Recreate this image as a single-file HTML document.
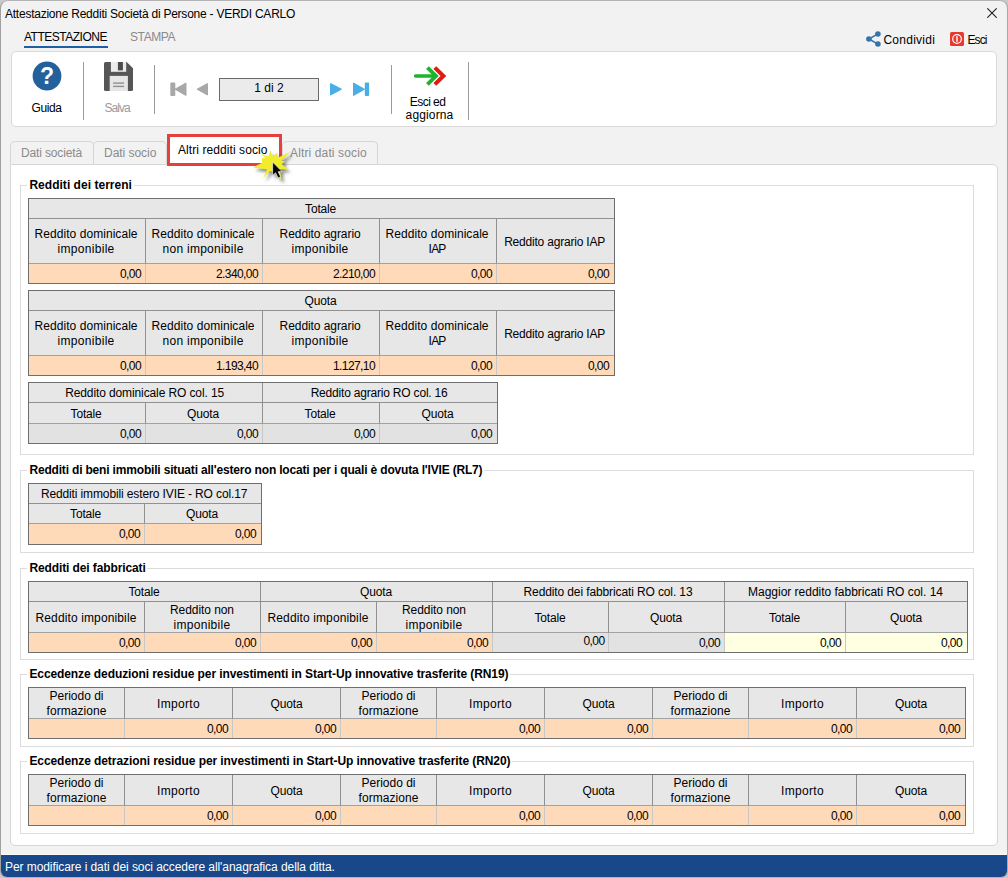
<!DOCTYPE html>
<html lang="it"><head><meta charset="utf-8"><title>Attestazione Redditi Società di Persone - VERDI CARLO</title>
<style>
*{box-sizing:content-box;margin:0;padding:0}
html,body{width:1008px;height:878px;overflow:hidden;background:#f2f2f2}
body{position:relative;font-family:"Liberation Sans",sans-serif;font-size:12px;color:#000;line-height:15px}
div{position:absolute}
.t{white-space:nowrap;line-height:15px}
.b{font-weight:bold;background:#fff;padding:0 2px}
.tb{border:0;box-sizing:border-box;border:1px solid #6e6e6e;background:#e7e7e7}
.c{display:flex;align-items:center;justify-content:center;text-align:center;background:#e7e7e7;overflow:hidden}
.c span{display:block;line-height:15px;white-space:nowrap;position:relative;top:1.4px}
.c i{display:block;font-style:normal}
.vp,.vg,.vy{justify-content:flex-end}
.vp span,.vg span,.vy span{padding-right:4px;letter-spacing:-0.59px;top:0.6px}
.vp{background:#ffdab9}
.vg{background:#e2e2e2}
.vy{background:#ffffe1}
.gb{border:1px solid #dcdcdc;box-sizing:border-box}
.sep{width:1px;background:#9a9a9a}
</style></head>
<body>
<div style="left:0;top:0;width:1008px;height:878px;background:#c9c9c9"></div>
<div style="left:0;top:0;width:1008px;height:878px;box-sizing:border-box;border:1px solid #b4b4b4;border-left-color:#a0a0a0;border-right-color:#a8a8a8;border-radius:8px 8px 7px 7px;background:#f2f2f2"></div>
<div class="t" style="left:5px;top:7px;letter-spacing:-0.24px">Attestazione Redditi Società di Persone - VERDI CARLO</div>
<svg style="position:absolute;left:987px;top:8px" width="10" height="10" viewBox="0 0 10 10"><path d="M0.3 0.3 L9.7 9.7 M9.7 0.3 L0.3 9.7" stroke="#222" stroke-width="1.1" fill="none"/></svg>
<div class="t" style="left:24px;top:30px;letter-spacing:-0.5px;color:#000">ATTESTAZIONE</div>
<div style="left:24px;top:46px;width:84px;height:2px;background:#1f5fa3"></div>
<div class="t" style="left:130px;top:30px;letter-spacing:-0.4px;color:#8a8a8a">STAMPA</div>
<svg style="position:absolute;left:865px;top:31px" width="17" height="17" viewBox="0 0 17 17">
<path d="M4 8 L12.5 3.2 M4 8 L12.5 12.8" stroke="#3573ab" stroke-width="1.5" fill="none"/>
<circle cx="3.9" cy="8" r="2.8" fill="#3573ab"/><circle cx="12.9" cy="3" r="2.8" fill="#3573ab"/><circle cx="12.9" cy="13" r="2.8" fill="#3573ab"/></svg>
<div class="t" style="left:883.4px;top:33px;letter-spacing:0.269px;">Condividi</div>
<svg style="position:absolute;left:950px;top:32px" width="14" height="14" viewBox="0 0 14 14">
<rect x="0" y="0" width="14" height="14" rx="1.5" fill="#e8392f"/>
<circle cx="7" cy="7" r="4.3" fill="none" stroke="#fff" stroke-width="1.2"/>
<rect x="6.3" y="4.2" width="1.4" height="5.6" fill="#fff"/></svg>
<div class="t" style="left:967.4px;top:33px;letter-spacing:-0.868px;">Esci</div>
<div style="left:11px;top:51px;width:986px;height:76px;box-sizing:border-box;border:1px solid #d9d9d9;border-radius:5px;background:#fff"></div>
<svg style="position:absolute;left:32px;top:61px" width="30" height="30" viewBox="0 0 30 30">
<circle cx="15" cy="15" r="14.4" fill="#23619d"/>
<text x="15.1" y="23.4" text-anchor="middle" font-family="Liberation Sans, sans-serif" font-weight="bold" font-size="23" fill="#fff">?</text></svg>
<div class="t" style="left:31.6px;top:101px;letter-spacing:-0.446px;">Guida</div>
<div class="sep" style="left:83px;top:62px;width:1px;height:58px;"></div>
<svg style="position:absolute;left:104px;top:62px" width="29" height="29" viewBox="0 0 29 29">
<path d="M1.5 0 H22.7 L29 6.2 V27.5 Q29 29 27.5 29 H1.5 Q0 29 0 27.5 V1.5 Q0 0 1.5 0 Z" fill="#565656"/>
<rect x="6.9" y="0" width="15.3" height="9.8" fill="#ececec"/>
<rect x="13.9" y="0" width="5" height="8.4" fill="#4c4c4c"/>
<rect x="5.7" y="13.9" width="18.2" height="15.1" fill="#e6e6e6"/>
<rect x="9.1" y="20.4" width="11" height="1.4" fill="#909090"/><rect x="9.1" y="23.7" width="11" height="1.4" fill="#909090"/>
</svg>
<div class="t" style="left:104.5px;top:101px;letter-spacing:-0.965px;color:#9a9a9a">Salva</div>
<div class="sep" style="left:154px;top:65px;width:1px;height:49px;"></div>
<svg style="position:absolute;left:170px;top:82px" width="40" height="15" viewBox="0 0 40 15">
<rect x="0.3" y="0.5" width="5" height="13.5" rx="1" fill="#a8a8a8"/>
<path d="M16 1 V13.5 L5 7.2 Z" fill="#a8a8a8" stroke="#a8a8a8" stroke-width="1" stroke-linejoin="round"/>
<path d="M37.5 1.5 V13 L27 7.2 Z" fill="#a8a8a8" stroke="#a8a8a8" stroke-width="1" stroke-linejoin="round"/>
</svg>
<div style="left:219px;top:78px;width:100px;height:23px;box-sizing:border-box;border:1px solid #6a6a6a;background:#ebebeb;text-align:center;line-height:19px">1 di 2</div>
<svg style="position:absolute;left:329px;top:82px" width="41" height="15" viewBox="0 0 41 15">
<path d="M1.5 1.5 V13 L12.5 7.2 Z" fill="#48aee7" stroke="#48aee7" stroke-width="1" stroke-linejoin="round"/>
<path d="M24.5 1 V13.5 L35.5 7.2 Z" fill="#48aee7" stroke="#48aee7" stroke-width="1" stroke-linejoin="round"/>
<rect x="35.8" y="0.5" width="4.3" height="13.5" rx="1" fill="#48aee7"/>
</svg>
<div class="sep" style="left:391px;top:65px;width:1px;height:49px;"></div>
<svg style="position:absolute;left:413px;top:65px" width="34" height="22" viewBox="0 0 34 22">
<path d="M21.8 2.6 L30.4 11 L21.8 19.4" fill="none" stroke="#e01c12" stroke-width="4" stroke-linecap="butt" stroke-linejoin="miter"/>
<path d="M2.6 11 H23" fill="none" stroke="#1db32f" stroke-width="3.6" stroke-linecap="round"/>
<path d="M14.4 2.6 L23 11 L14.4 19.4" fill="none" stroke="#1db32f" stroke-width="3.8" stroke-linecap="butt" stroke-linejoin="miter"/>
</svg>
<div class="t" style="left:409.8px;top:95px;letter-spacing:-0.551px;">Esci ed</div>
<div class="t" style="left:405.6px;top:108px;letter-spacing:0.135px;">aggiorna</div>
<div class="sep" style="left:468px;top:62px;width:1px;height:58px;"></div>
<div style="left:10px;top:164px;width:988px;height:682px;box-sizing:border-box;border:1px solid #d6d6d6;border-radius:0 5px 5px 5px;background:#fff"></div>
<div style="left:10px;top:141px;width:84px;height:23px;box-sizing:border-box;border:1px solid #d6d6d6;border-bottom:0;border-radius:5px 5px 0 0;background:#f2f2f2"></div>
<div class="t" style="left:21px;top:146px;letter-spacing:-0.143px;color:#8a8a8a">Dati società</div>
<div style="left:93px;top:141px;width:74px;height:23px;box-sizing:border-box;border:1px solid #d6d6d6;border-bottom:0;border-radius:5px 5px 0 0;background:#f2f2f2"></div>
<div class="t" style="left:104px;top:146px;letter-spacing:-0.040px;color:#8a8a8a">Dati socio</div>
<div style="left:282px;top:141px;width:96px;height:23px;box-sizing:border-box;border:1px solid #d6d6d6;border-bottom:0;border-radius:5px 5px 0 0;background:#f2f2f2"></div>
<div class="t" style="left:290px;top:146px;letter-spacing:0.130px;color:#8a8a8a">Altri dati socio</div>
<div style="left:167px;top:134px;width:115px;height:32px;box-sizing:border-box;border:3px solid #e5403c;background:#fff"></div>
<div class="t" style="left:178px;top:143px;letter-spacing:0.076px;">Altri redditi socio</div>
<svg style="position:absolute;left:240px;top:130px;overflow:visible" width="70" height="61" viewBox="0 0 1008 878">
<g style="filter:drop-shadow(40px 45px 25px rgba(0,0,0,0.42))">
<polygon points="440,290 475,385 540,320 545,400 730,310 600,440 650,455 600,490 690,570 570,560 600,730 500,600 430,590 330,700 390,570 340,560 180,540 320,470 310,410 370,400 300,340 410,380" fill="#f1ed2c"/>
<path d="M470,462 L470,655 L512,615 L548,690 L585,672 L550,600 L605,598 Z" fill="#050505" stroke="#fff" stroke-width="9" stroke-linejoin="round"/>
</g>
</svg>
<div style="left:1px;top:854px;width:1006px;height:1px;background:#fbfbfb"></div>
<div style="left:1px;top:855px;width:1006px;height:22px;background:#18478a;border-radius:0 0 6px 6px"></div>
<div class="t" style="left:5px;top:860px;color:#fff;letter-spacing:-0.07px">Per modificare i dati dei soci accedere all'anagrafica della ditta.</div>
<div class="gb" style="left:20px;top:185px;width:954px;height:270px;"></div>
<div class="t b" style="left:27px;top:178px;letter-spacing:0.029px;width:104.2px;overflow:hidden;padding:0 0 0 2.4px">Redditi dei terreni</div>
<div class="gb" style="left:20px;top:470px;width:954px;height:83px;"></div>
<div class="t b" style="left:27px;top:463px;letter-spacing:-0.175px;width:454.8px;overflow:hidden;padding:0 0 0 2.4px">Redditi di beni immobili situati all'estero non locati per i quali è dovuta l'IVIE (RL7)</div>
<div class="gb" style="left:20px;top:568px;width:954px;height:92px;"></div>
<div class="t b" style="left:27px;top:561px;letter-spacing:-0.110px;width:117.9px;overflow:hidden;padding:0 0 0 2.4px">Redditi dei fabbricati</div>
<div class="gb" style="left:20px;top:674px;width:954px;height:73px;"></div>
<div class="t b" style="left:27px;top:667px;letter-spacing:-0.091px;width:480.8px;overflow:hidden;padding:0 0 0 2.4px">Eccedenze deduzioni residue per investimenti in Start-Up innovative trasferite (RN19)</div>
<div class="gb" style="left:20px;top:761px;width:954px;height:73px;"></div>
<div class="t b" style="left:27px;top:754px;letter-spacing:-0.074px;width:482.8px;overflow:hidden;padding:0 0 0 2.4px">Eccedenze detrazioni residue per investimenti in Start-Up innovative trasferite (RN20)</div>
<div class="tb" style="left:28px;top:198px;width:587px;height:86px"></div>
<div class="c h" style="left:29px;top:199px;width:585px;height:19px;border-bottom:1px solid #909090;"><span style="left:-0.9px"><i style="letter-spacing:-0.173px;">Totale</i></span></div>
<div class="c h" style="left:29px;top:219px;width:116px;height:44px;border-right:1px solid #909090;border-bottom:1px solid #a2a2a2;"><span style="left:-0.9px"><i style="letter-spacing:0.051px;">Reddito dominicale</i><i style="letter-spacing:0.295px;">imponibile</i></span></div>
<div class="c vp" style="left:29px;top:264px;width:116px;height:19px;border-right:1px solid #c8c8c8;"><span><i>0,00</i></span></div>
<div class="c h" style="left:146px;top:219px;width:116px;height:44px;border-right:1px solid #909090;border-bottom:1px solid #a2a2a2;"><span style="left:-0.9px"><i style="letter-spacing:0.051px;">Reddito dominicale</i><i style="letter-spacing:0.256px;">non imponibile</i></span></div>
<div class="c vp" style="left:146px;top:264px;width:116px;height:19px;border-right:1px solid #c8c8c8;"><span><i>2.340,00</i></span></div>
<div class="c h" style="left:263px;top:219px;width:116px;height:44px;border-right:1px solid #909090;border-bottom:1px solid #a2a2a2;"><span style="left:-0.9px"><i style="letter-spacing:-0.072px;">Reddito agrario</i><i style="letter-spacing:0.295px;">imponibile</i></span></div>
<div class="c vp" style="left:263px;top:264px;width:116px;height:19px;border-right:1px solid #c8c8c8;"><span><i>2.210,00</i></span></div>
<div class="c h" style="left:380px;top:219px;width:116px;height:44px;border-right:1px solid #909090;border-bottom:1px solid #a2a2a2;"><span style="left:-0.9px"><i style="letter-spacing:0.051px;">Reddito dominicale</i><i style="letter-spacing:-0.781px;">IAP</i></span></div>
<div class="c vp" style="left:380px;top:264px;width:116px;height:19px;border-right:1px solid #c8c8c8;"><span><i>0,00</i></span></div>
<div class="c h" style="left:497px;top:219px;width:117px;height:44px;border-bottom:1px solid #a2a2a2;"><span style="left:-0.9px"><i style="letter-spacing:-0.198px;">Reddito agrario IAP</i></span></div>
<div class="c vp" style="left:497px;top:264px;width:117px;height:19px;"><span style="padding-right:5px"><i>0,00</i></span></div>
<div class="tb" style="left:28px;top:290px;width:587px;height:86px"></div>
<div class="c h" style="left:29px;top:291px;width:585px;height:19px;border-bottom:1px solid #909090;"><span style="left:-0.9px"><i style="letter-spacing:-0.140px;">Quota</i></span></div>
<div class="c h" style="left:29px;top:311px;width:116px;height:44px;border-right:1px solid #909090;border-bottom:1px solid #a2a2a2;"><span style="left:-0.9px"><i style="letter-spacing:0.051px;">Reddito dominicale</i><i style="letter-spacing:0.295px;">imponibile</i></span></div>
<div class="c vp" style="left:29px;top:356px;width:116px;height:19px;border-right:1px solid #c8c8c8;"><span><i>0,00</i></span></div>
<div class="c h" style="left:146px;top:311px;width:116px;height:44px;border-right:1px solid #909090;border-bottom:1px solid #a2a2a2;"><span style="left:-0.9px"><i style="letter-spacing:0.051px;">Reddito dominicale</i><i style="letter-spacing:0.256px;">non imponibile</i></span></div>
<div class="c vp" style="left:146px;top:356px;width:116px;height:19px;border-right:1px solid #c8c8c8;"><span><i>1.193,40</i></span></div>
<div class="c h" style="left:263px;top:311px;width:116px;height:44px;border-right:1px solid #909090;border-bottom:1px solid #a2a2a2;"><span style="left:-0.9px"><i style="letter-spacing:-0.072px;">Reddito agrario</i><i style="letter-spacing:0.295px;">imponibile</i></span></div>
<div class="c vp" style="left:263px;top:356px;width:116px;height:19px;border-right:1px solid #c8c8c8;"><span><i>1.127,10</i></span></div>
<div class="c h" style="left:380px;top:311px;width:116px;height:44px;border-right:1px solid #909090;border-bottom:1px solid #a2a2a2;"><span style="left:-0.9px"><i style="letter-spacing:0.051px;">Reddito dominicale</i><i style="letter-spacing:-0.781px;">IAP</i></span></div>
<div class="c vp" style="left:380px;top:356px;width:116px;height:19px;border-right:1px solid #c8c8c8;"><span><i>0,00</i></span></div>
<div class="c h" style="left:497px;top:311px;width:117px;height:44px;border-bottom:1px solid #a2a2a2;"><span style="left:-0.9px"><i style="letter-spacing:-0.198px;">Reddito agrario IAP</i></span></div>
<div class="c vp" style="left:497px;top:356px;width:117px;height:19px;"><span style="padding-right:5px"><i>0,00</i></span></div>
<div class="tb" style="left:28px;top:382px;width:470px;height:62px"></div>
<div class="c h" style="left:29px;top:383px;width:233px;height:19px;border-right:1px solid #909090;border-bottom:1px solid #909090;"><span style="left:-0.9px"><i style="letter-spacing:-0.108px;">Reddito dominicale RO col. 15</i></span></div>
<div class="c h" style="left:263px;top:383px;width:234px;height:19px;border-bottom:1px solid #909090;"><span style="left:-0.9px"><i style="letter-spacing:-0.197px;">Reddito agrario RO col. 16</i></span></div>
<div class="c h" style="left:29px;top:403px;width:116px;height:20px;border-right:1px solid #909090;border-bottom:1px solid #a2a2a2;"><span style="left:-0.9px"><i style="letter-spacing:-0.173px;">Totale</i></span></div>
<div class="c vg" style="left:29px;top:424px;width:116px;height:19px;border-right:1px solid #c8c8c8;"><span><i>0,00</i></span></div>
<div class="c h" style="left:146px;top:403px;width:116px;height:20px;border-right:1px solid #909090;border-bottom:1px solid #a2a2a2;"><span style="left:-0.9px"><i style="letter-spacing:-0.140px;">Quota</i></span></div>
<div class="c vg" style="left:146px;top:424px;width:116px;height:19px;border-right:1px solid #c8c8c8;"><span><i>0,00</i></span></div>
<div class="c h" style="left:263px;top:403px;width:116px;height:20px;border-right:1px solid #909090;border-bottom:1px solid #a2a2a2;"><span style="left:-0.9px"><i style="letter-spacing:-0.173px;">Totale</i></span></div>
<div class="c vg" style="left:263px;top:424px;width:116px;height:19px;border-right:1px solid #c8c8c8;"><span><i>0,00</i></span></div>
<div class="c h" style="left:380px;top:403px;width:117px;height:20px;border-bottom:1px solid #a2a2a2;"><span style="left:-0.9px"><i style="letter-spacing:-0.140px;">Quota</i></span></div>
<div class="c vg" style="left:380px;top:424px;width:117px;height:19px;"><span style="padding-right:5px"><i>0,00</i></span></div>
<div class="tb" style="left:28px;top:483px;width:234px;height:62px"></div>
<div class="c h" style="left:29px;top:484px;width:232px;height:19px;border-bottom:1px solid #909090;"><span style="left:-0.9px"><i style="letter-spacing:-0.124px;">Redditi immobili estero IVIE - RO col.17</i></span></div>
<div class="c h" style="left:29px;top:504px;width:115px;height:19px;border-right:1px solid #909090;border-bottom:1px solid #a2a2a2;"><span style="left:-0.9px"><i style="letter-spacing:-0.173px;">Totale</i></span></div>
<div class="c vp" style="left:29px;top:524px;width:115px;height:20px;border-right:1px solid #c8c8c8;"><span><i>0,00</i></span></div>
<div class="c h" style="left:145px;top:504px;width:116px;height:19px;border-bottom:1px solid #a2a2a2;"><span style="left:-0.9px"><i style="letter-spacing:-0.140px;">Quota</i></span></div>
<div class="c vp" style="left:145px;top:524px;width:116px;height:20px;"><span style="padding-right:5px"><i>0,00</i></span></div>
<div class="tb" style="left:28px;top:581px;width:940px;height:72px"></div>
<div class="c h" style="left:29px;top:582px;width:231px;height:19px;border-right:1px solid #909090;border-bottom:1px solid #909090;"><span style="left:-0.5px"><i style="letter-spacing:-0.173px;">Totale</i></span></div>
<div class="c h" style="left:261px;top:582px;width:231px;height:19px;border-right:1px solid #909090;border-bottom:1px solid #909090;"><span style="left:-0.5px"><i style="letter-spacing:-0.140px;">Quota</i></span></div>
<div class="c h" style="left:493px;top:582px;width:231px;height:19px;border-right:1px solid #909090;border-bottom:1px solid #909090;"><span style="left:-0.5px"><i style="letter-spacing:-0.116px;">Reddito dei fabbricati RO col. 13</i></span></div>
<div class="c h" style="left:725px;top:582px;width:242px;height:19px;border-bottom:1px solid #909090;"><span style="left:-0.5px"><i style="letter-spacing:-0.013px;">Maggior reddito fabbricati RO col. 14</i></span></div>
<div class="c h" style="left:29px;top:602px;width:115px;height:30px;border-right:1px solid #909090;border-bottom:1px solid #a2a2a2;"><span style="left:-0.5px"><i style="letter-spacing:0.125px;">Reddito imponibile</i></span></div>
<div class="c vp" style="left:29px;top:633px;width:115px;height:19px;border-right:1px solid #c8c8c8;"><span><i>0,00</i></span></div>
<div class="c h" style="left:145px;top:602px;width:115px;height:30px;border-right:1px solid #909090;border-bottom:1px solid #a2a2a2;"><span style="left:-0.5px"><i style="letter-spacing:-0.067px;">Reddito non</i><i style="letter-spacing:0.295px;">imponibile</i></span></div>
<div class="c vp" style="left:145px;top:633px;width:115px;height:19px;border-right:1px solid #c8c8c8;"><span><i>0,00</i></span></div>
<div class="c h" style="left:261px;top:602px;width:115px;height:30px;border-right:1px solid #909090;border-bottom:1px solid #a2a2a2;"><span style="left:-0.5px"><i style="letter-spacing:0.125px;">Reddito imponibile</i></span></div>
<div class="c vp" style="left:261px;top:633px;width:115px;height:19px;border-right:1px solid #c8c8c8;"><span><i>0,00</i></span></div>
<div class="c h" style="left:377px;top:602px;width:115px;height:30px;border-right:1px solid #909090;border-bottom:1px solid #a2a2a2;"><span style="left:-0.5px"><i style="letter-spacing:-0.067px;">Reddito non</i><i style="letter-spacing:0.295px;">imponibile</i></span></div>
<div class="c vp" style="left:377px;top:633px;width:115px;height:19px;border-right:1px solid #c8c8c8;"><span><i>0,00</i></span></div>
<div class="c h" style="left:493px;top:602px;width:115px;height:30px;border-right:1px solid #909090;border-bottom:1px solid #a2a2a2;"><span style="left:-0.5px"><i style="letter-spacing:-0.173px;">Totale</i></span></div>
<div class="c vg" style="left:493px;top:633px;width:115px;height:19px;border-right:1px solid #c8c8c8;"><span style="top:-1.4px;padding-right:3.5px"><i>0,00</i></span></div>
<div class="c h" style="left:609px;top:602px;width:115px;height:30px;border-right:1px solid #909090;border-bottom:1px solid #a2a2a2;"><span style="left:-0.5px"><i style="letter-spacing:-0.140px;">Quota</i></span></div>
<div class="c vg" style="left:609px;top:633px;width:115px;height:19px;border-right:1px solid #c8c8c8;"><span><i>0,00</i></span></div>
<div class="c h" style="left:725px;top:602px;width:120px;height:30px;border-right:1px solid #909090;border-bottom:1px solid #a2a2a2;"><span style="left:-0.5px"><i style="letter-spacing:-0.173px;">Totale</i></span></div>
<div class="c vy" style="left:725px;top:633px;width:120px;height:19px;border-right:1px solid #c8c8c8;"><span><i>0,00</i></span></div>
<div class="c h" style="left:846px;top:602px;width:121px;height:30px;border-bottom:1px solid #a2a2a2;"><span style="left:-0.5px"><i style="letter-spacing:-0.140px;">Quota</i></span></div>
<div class="c vy" style="left:846px;top:633px;width:121px;height:19px;"><span style="padding-right:5px"><i>0,00</i></span></div>
<div class="tb" style="left:28px;top:687px;width:938px;height:52px"></div>
<div class="c h" style="left:29px;top:688px;width:95px;height:30px;border-right:1px solid #909090;border-bottom:1px solid #a2a2a2;"><span style="left:0px"><i style="letter-spacing:-0.005px;">Periodo di</i><i style="letter-spacing:0.062px;">formazione</i></span></div>
<div class="c vp" style="left:29px;top:719px;width:95px;height:19px;border-right:1px solid #c8c8c8;"><span><i></i></span></div>
<div class="c h" style="left:125px;top:688px;width:107px;height:30px;border-right:1px solid #909090;border-bottom:1px solid #a2a2a2;"><span style="left:0px"><i style="letter-spacing:0.330px;">Importo</i></span></div>
<div class="c vp" style="left:125px;top:719px;width:107px;height:19px;border-right:1px solid #c8c8c8;"><span><i>0,00</i></span></div>
<div class="c h" style="left:233px;top:688px;width:107px;height:30px;border-right:1px solid #909090;border-bottom:1px solid #a2a2a2;"><span style="left:0px"><i style="letter-spacing:-0.140px;">Quota</i></span></div>
<div class="c vp" style="left:233px;top:719px;width:107px;height:19px;border-right:1px solid #c8c8c8;"><span><i>0,00</i></span></div>
<div class="c h" style="left:341px;top:688px;width:95px;height:30px;border-right:1px solid #909090;border-bottom:1px solid #a2a2a2;"><span style="left:0px"><i style="letter-spacing:-0.005px;">Periodo di</i><i style="letter-spacing:0.062px;">formazione</i></span></div>
<div class="c vp" style="left:341px;top:719px;width:95px;height:19px;border-right:1px solid #c8c8c8;"><span><i></i></span></div>
<div class="c h" style="left:437px;top:688px;width:107px;height:30px;border-right:1px solid #909090;border-bottom:1px solid #a2a2a2;"><span style="left:0px"><i style="letter-spacing:0.330px;">Importo</i></span></div>
<div class="c vp" style="left:437px;top:719px;width:107px;height:19px;border-right:1px solid #c8c8c8;"><span><i>0,00</i></span></div>
<div class="c h" style="left:545px;top:688px;width:107px;height:30px;border-right:1px solid #909090;border-bottom:1px solid #a2a2a2;"><span style="left:0px"><i style="letter-spacing:-0.140px;">Quota</i></span></div>
<div class="c vp" style="left:545px;top:719px;width:107px;height:19px;border-right:1px solid #c8c8c8;"><span><i>0,00</i></span></div>
<div class="c h" style="left:653px;top:688px;width:95px;height:30px;border-right:1px solid #909090;border-bottom:1px solid #a2a2a2;"><span style="left:0px"><i style="letter-spacing:-0.005px;">Periodo di</i><i style="letter-spacing:0.062px;">formazione</i></span></div>
<div class="c vp" style="left:653px;top:719px;width:95px;height:19px;border-right:1px solid #c8c8c8;"><span><i></i></span></div>
<div class="c h" style="left:749px;top:688px;width:107px;height:30px;border-right:1px solid #909090;border-bottom:1px solid #a2a2a2;"><span style="left:0px"><i style="letter-spacing:0.330px;">Importo</i></span></div>
<div class="c vp" style="left:749px;top:719px;width:107px;height:19px;border-right:1px solid #c8c8c8;"><span><i>0,00</i></span></div>
<div class="c h" style="left:857px;top:688px;width:108px;height:30px;border-bottom:1px solid #a2a2a2;"><span style="left:0px"><i style="letter-spacing:-0.140px;">Quota</i></span></div>
<div class="c vp" style="left:857px;top:719px;width:108px;height:19px;"><span style="padding-right:5px"><i>0,00</i></span></div>
<div class="tb" style="left:28px;top:774px;width:938px;height:52px"></div>
<div class="c h" style="left:29px;top:775px;width:95px;height:30px;border-right:1px solid #909090;border-bottom:1px solid #a2a2a2;"><span style="left:0px"><i style="letter-spacing:-0.005px;">Periodo di</i><i style="letter-spacing:0.062px;">formazione</i></span></div>
<div class="c vp" style="left:29px;top:806px;width:95px;height:19px;border-right:1px solid #c8c8c8;"><span><i></i></span></div>
<div class="c h" style="left:125px;top:775px;width:107px;height:30px;border-right:1px solid #909090;border-bottom:1px solid #a2a2a2;"><span style="left:0px"><i style="letter-spacing:0.330px;">Importo</i></span></div>
<div class="c vp" style="left:125px;top:806px;width:107px;height:19px;border-right:1px solid #c8c8c8;"><span><i>0,00</i></span></div>
<div class="c h" style="left:233px;top:775px;width:107px;height:30px;border-right:1px solid #909090;border-bottom:1px solid #a2a2a2;"><span style="left:0px"><i style="letter-spacing:-0.140px;">Quota</i></span></div>
<div class="c vp" style="left:233px;top:806px;width:107px;height:19px;border-right:1px solid #c8c8c8;"><span><i>0,00</i></span></div>
<div class="c h" style="left:341px;top:775px;width:95px;height:30px;border-right:1px solid #909090;border-bottom:1px solid #a2a2a2;"><span style="left:0px"><i style="letter-spacing:-0.005px;">Periodo di</i><i style="letter-spacing:0.062px;">formazione</i></span></div>
<div class="c vp" style="left:341px;top:806px;width:95px;height:19px;border-right:1px solid #c8c8c8;"><span><i></i></span></div>
<div class="c h" style="left:437px;top:775px;width:107px;height:30px;border-right:1px solid #909090;border-bottom:1px solid #a2a2a2;"><span style="left:0px"><i style="letter-spacing:0.330px;">Importo</i></span></div>
<div class="c vp" style="left:437px;top:806px;width:107px;height:19px;border-right:1px solid #c8c8c8;"><span><i>0,00</i></span></div>
<div class="c h" style="left:545px;top:775px;width:107px;height:30px;border-right:1px solid #909090;border-bottom:1px solid #a2a2a2;"><span style="left:0px"><i style="letter-spacing:-0.140px;">Quota</i></span></div>
<div class="c vp" style="left:545px;top:806px;width:107px;height:19px;border-right:1px solid #c8c8c8;"><span><i>0,00</i></span></div>
<div class="c h" style="left:653px;top:775px;width:95px;height:30px;border-right:1px solid #909090;border-bottom:1px solid #a2a2a2;"><span style="left:0px"><i style="letter-spacing:-0.005px;">Periodo di</i><i style="letter-spacing:0.062px;">formazione</i></span></div>
<div class="c vp" style="left:653px;top:806px;width:95px;height:19px;border-right:1px solid #c8c8c8;"><span><i></i></span></div>
<div class="c h" style="left:749px;top:775px;width:107px;height:30px;border-right:1px solid #909090;border-bottom:1px solid #a2a2a2;"><span style="left:0px"><i style="letter-spacing:0.330px;">Importo</i></span></div>
<div class="c vp" style="left:749px;top:806px;width:107px;height:19px;border-right:1px solid #c8c8c8;"><span><i>0,00</i></span></div>
<div class="c h" style="left:857px;top:775px;width:108px;height:30px;border-bottom:1px solid #a2a2a2;"><span style="left:0px"><i style="letter-spacing:-0.140px;">Quota</i></span></div>
<div class="c vp" style="left:857px;top:806px;width:108px;height:19px;"><span style="padding-right:5px"><i>0,00</i></span></div>
</body></html>
